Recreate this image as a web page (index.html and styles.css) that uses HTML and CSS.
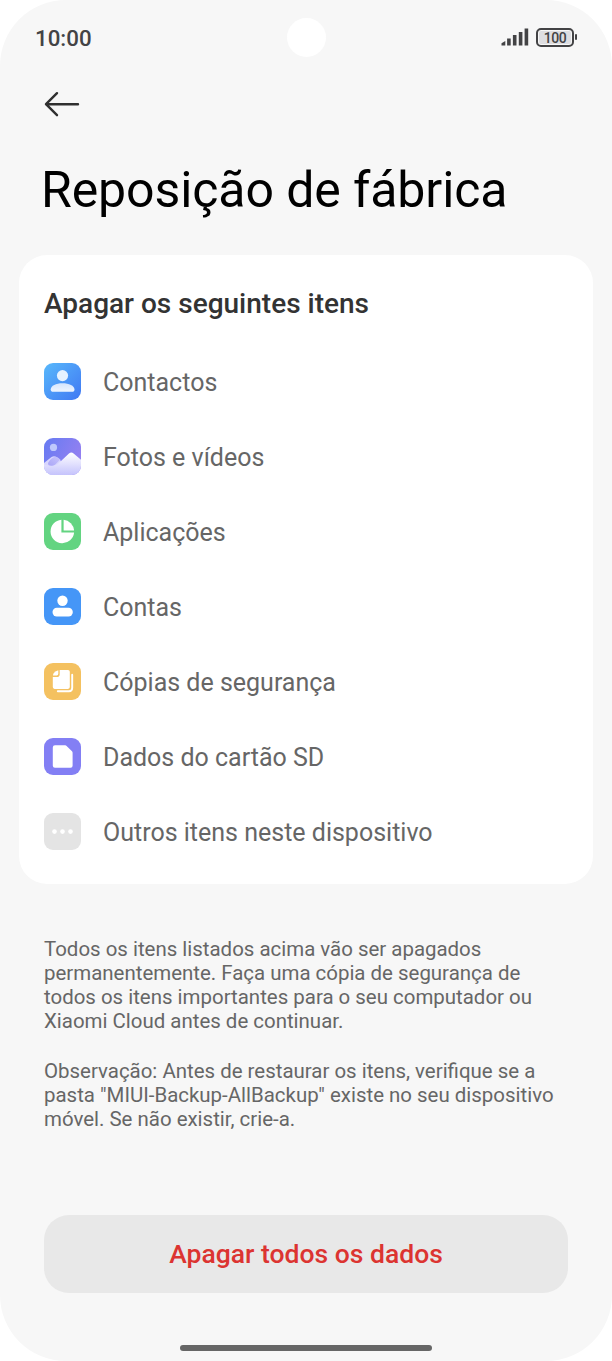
FILE: index.html
```html
<!DOCTYPE html>
<html lang="pt">
<head>
<meta charset="utf-8">
<title>Reposição de fábrica</title>
<link rel="stylesheet" href="styles.css">
</head>
<body>
<div class="screen">
  <header class="status">
    <span class="clock">10:00</span>
    <span class="camera"></span>
    <span class="indicators">
      <svg class="signal" width="28" height="20" viewBox="0 0 28 20" fill="none" stroke="#434345" stroke-width="3.6" stroke-linecap="butt">
        <path d="M7.9 18.6V11.6M13.7 18.6V8M19.6 18.6V5M25.4 18.6V1.6"/>
        <path d="M.5 18.6v-2.3l3.8-2.4v4.7z" fill="#434345" stroke="none"/>
      </svg>
      <span class="battery"><span class="charge">100</span></span>
      <span class="terminal"></span>
    </span>
  </header>

  <nav class="nav">
    <svg class="back" width="36" height="26" viewBox="0 0 36 26" fill="none" stroke="#303030" stroke-width="2.4" stroke-linecap="round" stroke-linejoin="round">
      <path d="M34 13.2H2M13 2.2L2 13.2l11 11"/>
    </svg>
  </nav>

  <h1 class="title">Reposição de fábrica</h1>

  <main class="card">
    <h2 class="heading">Apagar os seguintes itens</h2>
    <ul class="list">
      <li class="item">
        <svg class="icon" viewBox="0 0 37 37">
          <defs>
            <linearGradient id="contact" x1="0" y1="0" x2="1" y2="1"><stop offset="0" stop-color="#58b8fb"/><stop offset="1" stop-color="#4078f3"/></linearGradient>
            <linearGradient id="bust" x1="0" y1="0" x2="0" y2="1"><stop offset="0" stop-color="#d4e5fd"/><stop offset="1" stop-color="#eef5ff"/></linearGradient>
          </defs>
          <rect width="37" height="37" rx="9" fill="url(#contact)"/>
          <circle cx="18.5" cy="12.6" r="5.6" fill="#e6f2ff"/>
          <path d="M6.7 26.5c0-4 5.3-6.3 11.8-6.3s12 2.3 12 6.3c0 1.6-.9 2.3-2.5 2.3H9.2c-1.6 0-2.5-.7-2.5-2.3z" fill="url(#bust)"/>
        </svg>
        <span class="label">Contactos</span>
      </li>
      <li class="item">
        <svg class="icon" viewBox="0 0 37 37">
          <defs>
            <linearGradient id="sky" x1="0" y1="0" x2="1" y2=".5"><stop offset="0" stop-color="#667bf2"/><stop offset="1" stop-color="#9480f1"/></linearGradient>
            <linearGradient id="snow" x1="0" y1="0" x2="0" y2="1"><stop offset="0" stop-color="#fff"/><stop offset="1" stop-color="#c5c3fc"/></linearGradient>
            <linearGradient id="ridge" x1="1" y1="0" x2="0" y2="1"><stop offset="0" stop-color="#c9c5fc"/><stop offset="1" stop-color="#a9a5f7"/></linearGradient>
            <clipPath id="frame"><rect width="37" height="37" rx="9"/></clipPath>
          </defs>
          <g clip-path="url(#frame)">
            <path d="M0 0h37v37H0z" fill="url(#sky)"/>
            <circle cx="9.5" cy="9.4" r="3.6" fill="#bfc8fc"/>
            <path d="M0 25l7.5-5.9q2.5-1.6 5 0l3.5 2.4L24 37H0z" fill="#d8d6fd"/>
            <path d="M0 26.5l6 1.6 7-1.4L25 15.6q2.3-2 4.6 0L37 21.8V37H0z" fill="url(#snow)"/>
            <path d="M4 25.6c0-2.2 5-6.9 7.6-6.9 1.3 0 3.8 1.7 4.6 2.9l-4.6 4.6c-2.8 2.4-7.6 2.2-7.6-.6z" fill="url(#ridge)"/>
          </g>
        </svg>
        <span class="label">Fotos e vídeos</span>
      </li>
      <li class="item">
        <svg class="icon" viewBox="0 0 37 37">
          <rect width="37" height="37" rx="9" fill="#63d481"/>
          <path d="M17.4 6.7v12.9h12.7A11.8 11.8 0 1 1 17.4 6.7z" fill="#fff"/>
          <path d="M19.6 6.7a11.8 11.8 0 0 1 10.5 10.7H19.6z" fill="#fff"/>
        </svg>
        <span class="label">Aplicações</span>
      </li>
      <li class="item">
        <svg class="icon" viewBox="0 0 37 37">
          <rect width="37" height="37" rx="9" fill="#4596f7"/>
          <circle cx="18.5" cy="12.8" r="5.2" fill="#fff"/>
          <rect x="8.5" y="19.8" width="20.3" height="8.6" rx="4.3" fill="#fff"/>
        </svg>
        <span class="label">Contas</span>
      </li>
      <li class="item">
        <svg class="icon" viewBox="0 0 37 37">
          <rect width="37" height="37" rx="9" fill="#f4c160"/>
          <path d="M15.7 7H24q1.8 0 1.8 1.8v15.3q0 1.8-1.8 1.8H10.6q-1.8 0-1.8-1.8V14h4.1q2.8 0 2.8-2.8z" fill="#fff"/>
          <path d="M9 12.4q0-3.4 5.3-5.2v3.6q0 1.6-1.6 1.6z" fill="#fff"/>
          <path d="M28.2 11.8v13.3q0 3.2-3.2 3.2H13.8" fill="none" stroke="#fff" stroke-width="1.9" stroke-linecap="round"/>
        </svg>
        <span class="label">Cópias de segurança</span>
      </li>
      <li class="item">
        <svg class="icon" viewBox="0 0 37 37">
          <rect width="37" height="37" rx="9" fill="#837ff4"/>
          <path d="M11 7.3h10.2q.8 0 1.4.6l5.4 5.4q.6.6.6 1.4v13.1q0 2-2 2H11q-2.2 0-2.2-2V9.4q0-2.1 2.2-2.1z" fill="#fff"/>
        </svg>
        <span class="label">Dados do cartão SD</span>
      </li>
      <li class="item">
        <svg class="icon" viewBox="0 0 37 37">
          <rect width="37" height="37" rx="9" fill="#e4e4e4"/>
          <g fill="#fff"><circle cx="10.5" cy="18.6" r="2.3"/><circle cx="18.5" cy="18.6" r="2.3"/><circle cx="26.5" cy="18.6" r="2.3"/></g>
        </svg>
        <span class="label">Outros itens neste dispositivo</span>
      </li>
    </ul>
  </main>

  <section class="notes">
    <p class="note">Todos os itens listados acima vão ser apagados<br>permanentemente. Faça uma cópia de segurança de<br>todos os itens importantes para o seu computador ou<br>Xiaomi Cloud antes de continuar.</p>
    <p class="note">Observação: Antes de restaurar os itens, verifique se a<br>pasta "MIUI-Backup-AllBackup" existe no seu dispositivo<br>móvel. Se não existir, crie-a.</p>
  </section>

  <button class="erase" type="button">Apagar todos os dados</button>
  <div class="handle"></div>
</div>
</body>
</html>
```
FILE: styles.css
```css
* {
  box-sizing: border-box;
}

body {
  margin: 0;
  background: #fff;
  font-family: Roboto, "Liberation Sans", sans-serif;
}

.screen {
  display: flex;
  flex-direction: column;
  width: 612px;
  height: 1361px;
  overflow: hidden;
  border-radius: 66px;
  background: #f7f7f7;
}

.status {
  display: grid;
  grid-template-columns: 1fr 39px 1fr;
  align-items: center;
  height: 74px;
  padding: 0 35px;
}

.clock {
  padding-top: 2px;
  color: #434345;
  font-size: 22.3px;
  font-weight: 500;
  line-height: 26px;
}

.camera {
  width: 39px;
  height: 39px;
  border-radius: 50%;
  background: #fff;
}

.indicators {
  display: flex;
  align-items: center;
  justify-content: flex-end;
}

.signal {
  margin-right: 7px;
}

.battery {
  width: 38px;
  height: 19px;
  padding: 1px;
  border: 2px solid #434345;
  border-radius: 5px;
}

.charge {
  display: block;
  height: 13px;
  border-radius: 2px;
  background: #dedee1;
  color: #434345;
  font-size: 14px;
  font-weight: 500;
  letter-spacing: -0.5px;
  line-height: 14px;
  text-align: center;
}

.terminal {
  width: 2px;
  height: 6px;
  margin-left: 1px;
  border-radius: 1px;
  background: #434345;
}

.nav {
  height: 86px;
  padding: 17px 0 0 44px;
}

.back {
  display: block;
}

.title {
  height: 95px;
  margin: 0;
  padding-left: 41px;
  color: #000;
  font-size: 50px;
  font-weight: 400;
  letter-spacing: -0.1px;
  line-height: 60px;
  white-space: nowrap;
}

.card {
  height: 629px;
  margin: 0 19px;
  padding: 33px 25px 0;
  border-radius: 28px;
  background: #fff;
}

.heading {
  margin: 0;
  color: #333;
  font-size: 28px;
  font-weight: 500;
  line-height: 32px;
  white-space: nowrap;
}

.list {
  display: grid;
  grid-auto-rows: 75px;
  margin: 24px 0 0;
  padding: 0;
  list-style: none;
}

.item {
  display: flex;
  align-items: center;
  gap: 22px;
  color: #666;
  font-size: 25px;
  white-space: nowrap;
}

.icon {
  width: 37px;
  height: 37px;
}

.label {
  padding-top: 2px;
}

.notes {
  display: flex;
  flex-direction: column;
  gap: 26px;
  height: 278px;
  margin-top: 53px;
  padding-left: 44px;
}

.note {
  margin: 0;
  color: #666;
  font-size: 20.45px;
  line-height: 24px;
  white-space: nowrap;
}

.erase {
  height: 78px;
  margin: 0 44px;
  padding: 0 0 2px;
  border: 0;
  border-radius: 25px;
  background: #e8e8e8;
  color: #dc3431;
  font-family: inherit;
  font-size: 26.5px;
  font-weight: 500;
}

.handle {
  width: 252px;
  height: 6px;
  margin: 52px auto 0;
  border-radius: 3px;
  background: #666;
}
```
